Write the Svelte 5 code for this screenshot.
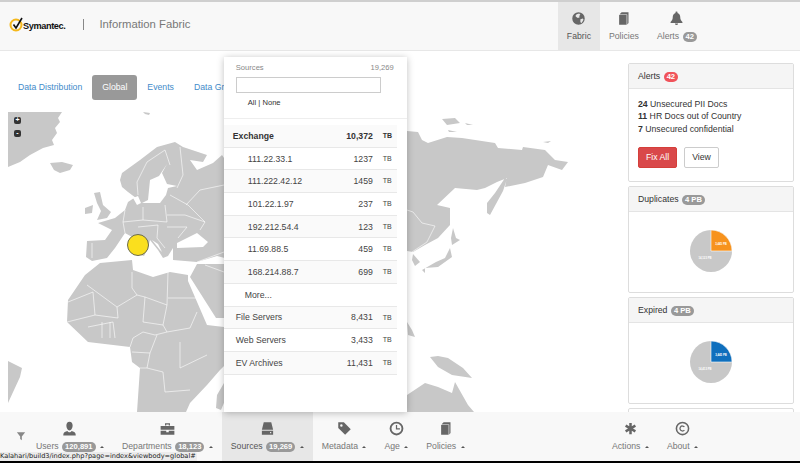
<script>
	const icons = {
		globe: 'M12 2a10 10 0 100 20 10 10 0 000-20zM9 5l4-1 2 2-2 2 1 2-3 1-2-1-2-2zM15 13l4-1 1 2-3 5-2-1z',
		book: 'M5 6.500h12V22H5zM5.500 5.500L9 2h11v17l-2 2.500V5.500z',
		bell: 'M12 1a1.6 1.6 0 011.6 2C17 4 18 7 18 10c0 4 1.500 5.500 3.500 7.500V19h-19v-1.500C4.500 15.500 6 14 6 10c0-3 1-6 4.400-7A1.600 1.600 0 0112 1zM9.500 20h5a2.500 2.500 0 01-5 0z',
		user: 'M12 1c3.200 0 5 2.500 5 6s-2 8-5 8-5-4.500-5-8 1.800-6 5-6zM2 23c0-4 1.500-5.500 6.500-7 1 1.500 2.200 2 3.500 2s2.500-.5 3.500-2c5 1.500 6.500 3 6.500 7z',
		briefcase: 'M1 8h22v6H1zM1 15.500h9V18h4v-2.500h9V22H1zM8 7V3.500h8V7h-2V5.500h-4V7z',
		hdd: 'M6 2h12l3 12H3zM3 15.500h18V22H3zM16 17.500v2h2v-2z',
		tag: 'M2 2h9l11 11-9 9L2 11zM7 5a2 2 0 100 4 2 2 0 000-4z',
		clock: 'M12 1a11 11 0 100 22 11 11 0 000-22zM12 4a8 8 0 110 16 8 8 0 010-16zM11 6.500h2V11.500h4.500v2H11z',
		asterisk: 'M10 3h4v5.500l4.800-2.800 2 3.500L16 12l4.800 2.800-2 3.500L14 15.500V21h-4v-5.500l-4.800 2.800-2-3.500L8 12 3.200 9.200l2-3.500L10 8.500z',
		copyright: 'M12 1a11 11 0 100 22 11 11 0 000-22zM12 3.500a8.500 8.500 0 110 17 8.500 8.500 0 010-17zM12 7a5 5 0 103.800 8.200l-1.500-1.300A3 3 0 1112 9a3 3 0 012.300 1.100l1.500-1.300A5 5 0 0012 7z'
	};

	const topNav = [
		{ label: 'Fabric', icon: 'globe', active: true },
		{ label: 'Policies', icon: 'book' },
		{ label: 'Alerts', icon: 'bell', badge: '42' }
	];

	const leftNav = [
		{ label: 'Users', icon: 'user', badge: '120,891' },
		{ label: 'Departments', icon: 'briefcase', badge: '18,123' },
		{ label: 'Sources', icon: 'hdd', badge: '19,269', active: true },
		{ label: 'Metadata', icon: 'tag' },
		{ label: 'Age', icon: 'clock' },
		{ label: 'Policies', icon: 'book' }
	];

	const rightNav = [
		{ label: 'Actions', icon: 'asterisk' },
		{ label: 'About', icon: 'copyright' }
	];

	const pills = ['Data Distribution', 'Global', 'Events', 'Data Groups'];

	const rows = [
		{ name: 'Exchange', size: '10,372', kind: 'head' },
		{ name: '111.22.33.1', size: '1237', kind: 'sub' },
		{ name: '111.222.42.12', size: '1459', kind: 'sub' },
		{ name: '101.22.1.97', size: '237', kind: 'sub' },
		{ name: '192.212.54.4', size: '123', kind: 'sub' },
		{ name: '11.69.88.5', size: '459', kind: 'sub' },
		{ name: '168.214.88.7', size: '699', kind: 'sub' },
		{ name: 'More...', kind: 'more' },
		{ name: 'File Servers', size: '8,431', kind: 'top' },
		{ name: 'Web Servers', size: '3,433', kind: 'top' },
		{ name: 'EV Archives', size: '11,431', kind: 'top' }
	];

	const pies = [
		{ title: 'Duplicates', color: '#f7931e', big: '14,123 PB', small: '3,445 PB' },
		{ title: 'Expired', color: '#0f6fbd', big: '14,413 PB', small: '3,445 PB' }
	];

	const land = [
		'M8 112L62 112 58 118 60 122 55 128 57 133 52 140 54 145 43 148 30 155 20 162 8 167Z',
		'M50 163L62 162 73 165 70 170 60 173 54 170Z',
		'M143 112L150 113 149 115 145 114Z',
		'M94 193L100 192 103 205 111 212 107 218 97 220 101 211 97 203Z',
		'M85 208L93 205 92 213 85 214Z',
		// eurasia
		'M120 180L122 173 140 160 157 147 175 142 183 147 207 155 203 162 190 160 197 170 213 163 222 155 226 161 300 140 407 131 418 132 422 140 428 143 447 137 462 138 495 143 498 148 522 150 523 147 545 150 555 160 568 162 562 170 548 165 543 177 525 183 505 187 507 178 497 182 485 188 477 190 455 188 437 205 450 208 450 225 438 238 425 245 413 252 407 251 395 290 300 300 240 262 217 256 197 262 173 260 173 248 168 256 163 258 158 250 150 240 148 248 144 256 138 254 134 238 125 233 115 248 107 258 92 261 86 257 87 241 105 240 112 230 98 223 115 218 125 210 128 202 134 198 140 201 128 192 122 187Z',
		// africa
		'M85 275L100 263 132 260 133 270 153 277 170 272 188 275 188 281 207 325 224 327 260 330 230 360 220 370 207 385 190 403 186 412 137 412 140 368 132 362 130 347 88 342 67 322 68 300Z',
		// arabia
		'M190 277L197 264 240 264 280 310 224 318 216 318Z',
		'M217 395L224 383 226 398 221 410 216 408Z',
		'M8 361L22 368 20 377 8 403Z',
		// far east islands
		'M505 178L507 179 503 191 490 215 487 213 487 203 495 193Z',
		'M453 228L456 238 460 240 452 245 451 238Z',
		'M450 248L452 257 438 267 425 268 425 273 422 270 436 262 445 258Z',
		'M413 254L420 262 415 266 412 260Z',
		'M442 119L455 118 460 123 447 125Z',
		'M465 123L473 125 467 125Z',
		'M448 130L457 132 449 132Z',
		'M543 142L551 141 548 143Z',
		'M407 322L412 330 415 337 408 335Z',
		'M430 357L438 356 448 358 463 368 472 378 452 375 438 367Z',
		'M395 400L407 395 425 383 438 387 452 393 455 382 468 405 474 412 395 412Z'
	].join(' ');

	const water = [
		'M167 164L159 176 150 180 148 200 142 203 160 203 166 195 168 188 177 186 167 184 162 173Z',
		'M138 196L141 203 137 205 133 198Z',
		'M177 243L197 233 208 242 203 247 177 248Z',
		'M152 240L160 250 162 252 158 244Z'
	].join(' ');

	const borders = [
		'M87 285L117 307 137 295 145 297 167 305 168 272M168 298L197 298',
		'M132 272L132 288 137 295M117 307L118 318 95 315 93 292 68 302M95 315L67 322',
		'M145 297L143 322 163 325 167 305M163 325L167 332 190 328 197 312M143 332L155 335 167 332',
		'M130 347L133 338 143 332M132 352L150 353 157 335M150 353L147 368 140 368',
		'M180 342L180 368 207 355M147 368L163 372 165 392 190 390M88 327L113 322 115 338M102 322L102 338M110 322L110 338',
		'M165 150L147 162 137 182 138 195M170 165L165 150M180 147L183 175 177 188',
		'M143 207L143 220 123 222M165 205L167 222 143 220M167 215L185 215 205 222 200 230',
		'M167 227L187 227 178 238M138 227L158 225 157 238 165 248M125 210L123 222 125 233',
		'M92 243L92 258M170 195L188 205 205 222M186 205L200 190 224 185',
		'M197 262L224 252M224 272L205 265M407 210L413 212 422 223 435 226 427 242 412 252'
	].join(' ');
</script>

{#snippet icon(name)}
	<svg class="icon" viewBox="0 0 24 24"><path d={icons[name]} fill-rule="evenodd" /></svg>
{/snippet}

<div class="app">
	<header>
		<div class="brand">
			<svg class="logo" viewBox="0 0 16 16">
				<circle cx="7" cy="9" r="5.500" fill="none" stroke="#f5b81c" stroke-width="2" />
				<path d="M4.500 8.500L7 12 13 2" fill="none" stroke="#111" stroke-width="1.600" />
			</svg>
			<span class="wordmark">Symantec.</span>
			<span class="divider"></span>
			<span class="product">Information Fabric</span>
		</div>
		<nav class="top-nav">
			{#each topNav as item}
				<div class="nav-item" class:active={item.active}>
					{@render icon(item.icon)}
					<div class="nav-label">
						{item.label}
						{#if item.badge}<span class="badge">{item.badge}</span>{/if}
					</div>
				</div>
			{/each}
		</nav>
	</header>

	<main>
		<section class="content">
			<ul class="pills">
				{#each pills as pill}
					<li class:on={pill === 'Global'}>{pill}</li>
				{/each}
			</ul>
			<div class="map">
				<svg viewBox="8 112 617 300" width="617" height="300">
					<path d={land} fill="#c8c8c8" />
					<path d={water} fill="#fff" />
					<path d={borders} fill="none" stroke="#fff" stroke-width="0.6" />
					<circle cx="138" cy="245" r="10.500" fill="#fadf1e" stroke="#6b6b4a" />
				</svg>
				<div class="zoom-btns">
					<span>+</span>
					<span>-</span>
				</div>
			</div>
		</section>

		<aside>
			<div class="panel alerts">
				<div class="panel-head">Alerts <span class="badge red">42</span></div>
				<div class="panel-body">
					<div><b>24</b> Unsecured PII Docs</div>
					<div><b>11</b> HR Docs out of Country</div>
					<div><b>7</b> Unsecured confidential</div>
					<div class="actions">
						<button class="btn danger">Fix All</button>
						<button class="btn">View</button>
					</div>
				</div>
			</div>
			{#each pies as pie}
				<div class="panel chart">
					<div class="panel-head">{pie.title} <span class="badge">4 PB</span></div>
					<div class="pie-wrap">
						<svg viewBox="0 0 46 46" width="46" height="46">
							<circle cx="23" cy="23" r="21" fill="#c8c8c8" />
							<path d="M23 2A21 21 0 0144 23H23Z" fill={pie.color} stroke="#fff" stroke-width="0.6" />
							<text x="33" y="17" class="pie-text" text-anchor="middle">{pie.small}</text>
							<text x="17" y="31" class="pie-text" text-anchor="middle">{pie.big}</text>
						</svg>
					</div>
				</div>
			{/each}
			<div class="panel"></div>
		</aside>
	</main>

	<footer>
		<svg class="filter" viewBox="0 0 24 24"><path d="M2 3h20l-8 10v9l-4-3v-6z" /></svg>
		{#each leftNav as item}
			<div class="nav-item" class:active={item.active}>
				{@render icon(item.icon)}
				<div class="nav-label">
					{item.label}
					{#if item.badge}<span class="badge">{item.badge}</span>{/if}
					<span class="caret"></span>
				</div>
				{#if item.label === 'Sources'}
					<div class="dropup">
						<div class="drop-top">
							<span>Sources</span>
							<span>19,269</span>
						</div>
						<input type="text" />
						<div class="all-none">All | None</div>
						<div class="drop-rows">
							{#each rows as row, i}
								<div class="row {row.kind}" class:odd={i % 2 === 0}>
									<span class="name">{row.name}</span>
									{#if row.size}
										<span class="size">{row.size}</span>
										<span class="unit">TB</span>
									{/if}
								</div>
							{/each}
						</div>
					</div>
				{/if}
			</div>
		{/each}
		<div class="right-nav">
			{#each rightNav as item}
				<div class="nav-item">
					{@render icon(item.icon)}
					<div class="nav-label">{item.label} <span class="caret"></span></div>
				</div>
			{/each}
		</div>
		<div class="status">Kalahari/build3/index.php?page=index&amp;viewbody=global#</div>
	</footer>
</div>

<style>
	:global(body) {
		margin: 0;
		background: #fff;
	}
	.app {
		width: 800px;
		height: 463px;
		display: flex;
		flex-direction: column;
		overflow: hidden;
		font-family: 'Liberation Sans', Arial, sans-serif;
		font-size: 8.700px;
		color: #333;
	}
	header {
		flex: none;
		display: flex;
		justify-content: space-between;
		height: 48px;
		padding-right: 94px;
		background: #f8f8f8;
		border-top: 2px solid #cfcfcf;
		border-bottom: 1px solid #e7e7e7;
	}
	.brand {
		display: flex;
		align-items: center;
		padding-left: 9px;
		padding-bottom: 4px;
	}
	.logo {
		width: 16px;
		height: 16px;
	}
	.wordmark {
		font-size: 9.200px;
		font-weight: bold;
		letter-spacing: -0.4px;
		color: #111;
		margin-top: 4px;
		margin-left: -2px;
	}
	.divider {
		width: 1px;
		height: 11px;
		background: #888;
		margin: 0 15px 0 18px;
	}
	.product {
		font-size: 11.300px;
		color: #777;
	}
	.top-nav {
		display: flex;
	}
	.nav-item {
		position: relative;
		display: flex;
		flex-direction: column;
		align-items: center;
		padding: 9px 9px 0;
		color: #777;
	}
	.nav-item.active {
		background: #e7e7e7;
		color: #555;
	}
	.icon {
		width: 15px;
		height: 15px;
		fill: #666;
		margin-bottom: 4px;
	}
	.nav-label {
		white-space: nowrap;
		line-height: 12px;
	}
	.badge {
		display: inline-block;
		min-width: 6px;
		padding: 0 3px;
		border-radius: 6px;
		background: #999;
		color: #fff;
		font-size: 7.600px;
		font-weight: bold;
		line-height: 10px;
		margin-left: 1px;
	}
	.badge.red {
		background: #f0535a;
	}
	.caret {
		display: inline-block;
		width: 0;
		height: 0;
		margin-left: 2px;
		vertical-align: 1px;
		border-left: 2.500px solid transparent;
		border-right: 2.500px solid transparent;
		border-bottom: 2.500px solid #555;
	}
	main {
		flex: 1;
		min-height: 0;
		display: flex;
	}
	.content {
		width: 628px;
		flex: none;
		padding-top: 24px;
		box-sizing: border-box;
	}
	.pills {
		list-style: none;
		display: flex;
		margin: 0 0 12px;
		padding: 0 0 0 8px;
		white-space: nowrap;
	}
	.pills li {
		padding: 0 10px;
		height: 25px;
		line-height: 25px;
		color: #428bca;
		border-radius: 3px;
	}
	.pills li.on {
		background: #999;
		color: #fff;
	}
	.map {
		position: relative;
		margin-left: 8px;
		width: 617px;
		height: 300px;
	}
	.map svg {
		display: block;
	}
	.zoom-btns {
		position: absolute;
		left: 6px;
		top: 5px;
		display: flex;
		flex-direction: column;
		gap: 6px;
	}
	.zoom-btns span {
		width: 7px;
		height: 7px;
		border-radius: 2px;
		background: #333;
		color: #fff;
		font-size: 7px;
		font-weight: bold;
		line-height: 6px;
		text-align: center;
	}
	aside {
		width: 166px;
		flex: none;
		padding-top: 12px;
		display: flex;
		flex-direction: column;
		gap: 4px;
		overflow: hidden;
	}
	.panel {
		flex: none;
		box-sizing: border-box;
		border: 1px solid #ddd;
		border-radius: 2px;
		min-height: 20px;
	}
	.alerts {
		height: 119px;
	}
	.chart {
		height: 107px;
	}
	.panel-head {
		height: 24px;
		line-height: 24px;
		padding-left: 9px;
		background: #f5f5f5;
		border-bottom: 1px solid #e4e4e4;
		color: #333;
	}
	.panel-body {
		padding: 9px 9px 0;
		line-height: 12.300px;
	}
	.actions {
		display: flex;
		gap: 7px;
		margin-top: 12px;
	}
	.btn {
		height: 21px;
		padding: 0 7px;
		border: 1px solid #ccc;
		border-radius: 2px;
		background: #fff;
		color: #333;
		font: inherit;
	}
	.btn.danger {
		background: #d9484a;
		border-color: #d43f3a;
		color: #fff;
	}
	.pie-wrap {
		display: flex;
		justify-content: center;
		padding-top: 16px;
	}
	.pie-text {
		font-size: 2.800px;
		font-weight: bold;
		fill: #fff;
	}
	footer {
		position: relative;
		flex: none;
		height: 49px;
		display: flex;
		background: #f8f8f8;
		border-bottom: 2px solid #000;
		padding-left: 16px;
	}
	.filter {
		width: 10px;
		height: 10px;
		fill: #888;
		margin: 19px 1px 0 0;
		flex: none;
	}
	.right-nav {
		display: flex;
		margin-left: auto;
		padding-right: 93px;
	}
	.dropup {
		position: absolute;
		left: 2px;
		bottom: 100%;
		width: 183px;
		height: 355px;
		box-sizing: border-box;
		padding: 6px 0 0;
		background: #fff;
		box-shadow: 0 1px 7px rgba(0, 0, 0, 0.25);
		color: #333;
		z-index: 5;
	}
	.drop-top {
		display: flex;
		justify-content: space-between;
		padding: 0 13px 0 12px;
		font-size: 7.600px;
		color: #888;
		line-height: 10px;
	}
	.dropup input {
		display: block;
		box-sizing: border-box;
		width: 145px;
		height: 16px;
		margin: 4px 0 0 12px;
		border: 1px solid #ccc;
		background: #fff;
		padding: 0;
	}
	.all-none {
		margin-top: 5px;
		padding: 0 0 10px 24px;
		font-size: 7.600px;
		line-height: 10px;
		border-bottom: 1px solid #eee;
	}
	.drop-rows {
		margin-top: 6px;
		width: 173px;
	}
	.row {
		display: flex;
		align-items: center;
		box-sizing: border-box;
		height: 22.700px;
		border-bottom: 1px solid #e8e8e8;
		padding-right: 5px;
		color: #444;
	}
	.row.odd {
		background: #fafafa;
	}
	.name {
		flex: 1;
		padding-left: 12px;
	}
	.head {
		font-weight: bold;
		color: #333;
	}
	.head .name {
		padding-left: 9px;
	}
	.sub .name {
		padding-left: 24px;
	}
	.more .name {
		padding-left: 21px;
	}
	.unit {
		width: 9px;
		margin-left: 10px;
		font-size: 7px;
		line-height: 9px;
		align-self: flex-start;
		margin-top: 6px;
	}
	.status {
		position: absolute;
		left: 0;
		bottom: 0;
		width: 197px;
		height: 9px;
		background: #ececec;
		border-radius: 0 2px 0 0;
		font-family: 'DejaVu Sans', sans-serif;
		font-size: 6.600px;
		line-height: 9px;
		color: #222;
		white-space: nowrap;
		overflow: hidden;
	}
</style>
